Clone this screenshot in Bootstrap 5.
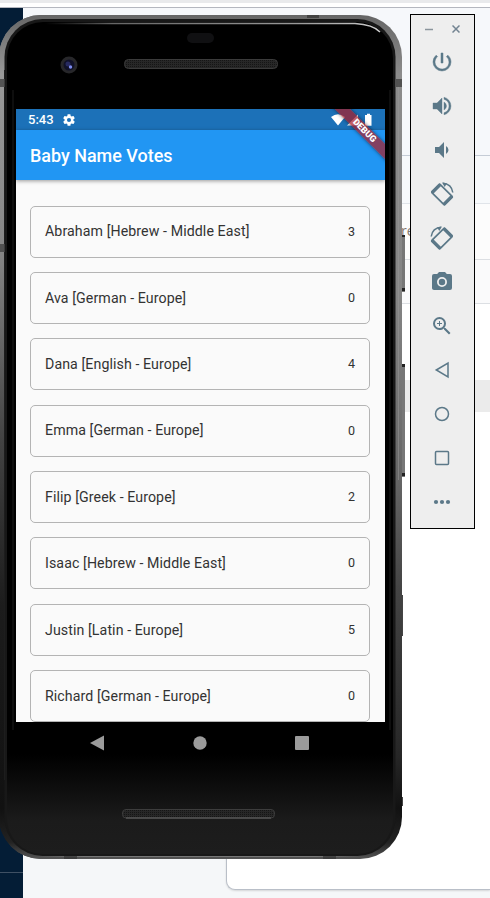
<!DOCTYPE html>
<html lang="en">
<head>
<meta charset="utf-8">
<meta name="viewport" content="width=device-width, initial-scale=1">
<title>Baby Name Votes</title>
<link href="https://cdn.jsdelivr.net/npm/bootstrap@5.3.0/dist/css/bootstrap.min.css" rel="stylesheet">
<style>
body{font-family:Roboto,sans-serif;background:#fff}
.desktop{width:490px;height:898px;background:#f5f7f9}
.browser-strip{height:8px;background:linear-gradient(#e9eaec 0 3px,#fff 3px 7px,#b4b7bf 7px)}
.side-nav{width:23px;height:890px;background:#041d36}
.side-nav hr{margin:864px 0 0;opacity:1;border-color:#3f5064}
.page-area{height:882px}
.page-top{background:#f6f8fb}
.p-head{height:148px;border-bottom:1px solid #c5ccd6}
.p-sub{height:48px;background:#f7f9fb;border-bottom:1px solid #e1e5ea}
.page-panel{margin-left:203px;border:1px solid #b9bfc8;border-top:0;border-right:0;border-radius:0 0 0 9px;background:#fff;box-shadow:0 1px 2px #0002}
.p-row{height:56px;background:#fcfcfc;border-bottom:1px solid #dcdfe3;padding:17px 0 0 174px;font:14px/20px "Open Sans",sans-serif;color:#85796f}
.p-row2{height:44px;background:#fafafb;border-bottom:1px solid #dcdfe3}
.p-band{height:32px;margin-top:76px;background:#ebebeb}
.phone{left:0;top:0;width:406px;height:898px}
.screen{left:16px;top:109px;width:369px;height:613px;background:#fafafa}
.status{height:21px;background:#1c71b8;color:#fff;font-size:13px;font-weight:500;padding:0 12px 0 12px}
.appbar{height:50px;background:#2196f3;color:#fff;font-size:17.95px;font-weight:500;padding-left:14px;line-height:51px;box-shadow:0 1px 4px #0006}
.vote-list{padding:25.600px 15px 0 14px;gap:14.350px}
.vote{height:52px;border:1px solid #b4b4b4;border-radius:5px;padding:1px 14px 0;font-size:14.2px;letter-spacing:.085px;color:#333;flex:none}
.vote b{font-weight:400;font-size:12.5px}
.ribbon{right:-22px;top:14px;width:90px;height:10.6px;transform:rotate(45deg);background:#a81e2ab8;box-shadow:0 0 4px #0008;color:#fff;font-size:9px;font-weight:900;line-height:11px;text-align:center;padding-left:7px}
.emu{left:410px;top:14px;width:65px;height:515px;border:1px solid #000;background:#eee;color:#5b7888;padding-right:2px}
.emu-title{height:25px;padding:2px 12px 0 14px}
.emu-btn{height:44px}
svg{display:block}
</style>
<script src="https://cdn.jsdelivr.net/npm/bootstrap@5.3.0/dist/js/bootstrap.bundle.min.js"></script>
</head>
<body>
<div class="desktop position-relative overflow-hidden">
  <div class="browser-strip"></div>
  <div class="d-flex">
    <div class="side-nav"><hr></div>
    <div class="page-area flex-grow-1 d-flex flex-column">
      <div class="page-top"><div class="p-head"></div><div class="p-sub"></div></div>
      <div class="page-panel flex-grow-1"><div class="p-row">re</div><div class="p-row2"></div><div class="p-band"></div></div>
    </div>
  </div>

  <div class="phone position-absolute">
    <svg width="406" height="898" viewBox="0 0 406 898">
      <defs>
        <linearGradient id="rim" x2="0" y2="1"><stop offset="0" stop-color="#666"/><stop offset=".07" stop-color="#8c8c8c"/><stop offset=".33" stop-color="#858585"/><stop offset=".55" stop-color="#666"/><stop offset=".68" stop-color="#444"/><stop offset=".88" stop-color="#262626"/><stop offset=".94" stop-color="#111"/><stop offset=".98" stop-color="#222"/><stop offset="1" stop-color="#555"/></linearGradient>
        <linearGradient id="rimL" x2="0" y2="1"><stop offset="0" stop-color="#666"/><stop offset=".07" stop-color="#999"/><stop offset=".28" stop-color="#868686"/><stop offset=".5" stop-color="#444"/><stop offset=".7" stop-color="#1c1c1c"/><stop offset=".94" stop-color="#111"/><stop offset=".98" stop-color="#222"/><stop offset="1" stop-color="#555"/></linearGradient>
        <linearGradient id="face" x2="0" y2="1"><stop offset="0" stop-color="#000"/><stop offset=".88" stop-color="#000"/><stop offset=".96" stop-color="#1b1b1b"/><stop offset="1" stop-color="#1d1d1d"/></linearGradient>
        <linearGradient id="shine"><stop offset="0" stop-color="#555" stop-opacity="0"/><stop offset=".2" stop-color="#666"/><stop offset=".75" stop-color="#999"/><stop offset="1" stop-color="#ccc"/></linearGradient>
        <linearGradient id="edge"><stop offset="0" stop-color="#777" stop-opacity="0"/><stop offset=".15" stop-color="#777"/><stop offset=".85" stop-color="#777"/><stop offset="1" stop-color="#777" stop-opacity="0"/></linearGradient>
        <pattern id="mesh" width="2" height="2" patternUnits="userSpaceOnUse"><rect width="2" height="2" fill="#272727"/><rect width="1" height="1" fill="#151515"/></pattern>
        <clipPath id="left"><path d="M0 0H200V898H0z"/></clipPath>
      </defs>
      <path d="M401 235h4v57h-4zM401 364h4v113h-4z" fill="#777"/>
      <path d="M402 235h3v2h-3zM402 288h3v3h-3zM402 364h3v3h-3zM402 473h3v3h-3z" fill="#222"/>
      <path d="M401 595h2v41h-2zM401 797h2v9h-2z" fill="#444"/>
      <rect x="-1" y="15" width="403" height="844" rx="42" fill="url(#rim)"/>
      <rect x="-1" y="15" width="403" height="844" rx="42" fill="url(#rimL)" clip-path="url(#left)"/>
      <rect x="4.500" y="19" width="391" height="837" rx="38" fill="#181818"/>
      <rect x="7" y="22" width="386" height="832" rx="36" fill="url(#face)"/>
      <path d="M4.500 70V780M13 90V730M390 90V730" stroke="#1d1d1d" fill="none"/>
      <path d="M398.500 80V480" stroke="#999" stroke-opacity=".5"/>
      <path d="M45 23.500H355q18 1 25 8.500" fill="none" stroke="url(#shine)" stroke-width="1.500"/>
      <path d="M35 856h330v1H35z" fill="url(#edge)"/>
      <path d="M0 79h5v8H0zM396 79h6v8h-6zM0 244h5v8H0z" fill="#444" fill-opacity=".8"/>
      <path d="M64 856h13v3H64zM323 856h13v3h-13zM307 15h12v3h-12z" fill="#333" fill-opacity=".7"/>
      <rect x="187" y="33" width="27" height="10" rx="5" fill="#101012"/>
      <rect x="124.500" y="59.500" width="153" height="9" rx="4" fill="url(#mesh)" stroke="#3b3b3b"/>
      <rect x="122.500" y="809.500" width="152" height="8.500" rx="3.500" fill="url(#mesh)" stroke="#3d3d3d"/>
      <path d="M126 818h145" stroke="#666"/>
      <circle cx="69" cy="65" r="8.500" fill="#27272a"/><circle cx="69" cy="65" r="5.500" fill="#101128"/><circle cx="68" cy="64" r="2.500" fill="#272a60"/><circle cx="70.500" cy="67" r="1.700" fill="#7d8cf0"/>
      <path d="M90 743l14-7.500v15z" fill="#9b9b9b"/><circle cx="200" cy="743" r="6.700" fill="#9b9b9b"/><rect x="295" y="736" width="14" height="14" rx="1" fill="#9b9b9b"/>
    </svg>
    <div class="screen position-absolute overflow-hidden d-flex flex-column">
      <div class="status d-flex align-items-center flex-shrink-0">
        <span>5:43</span>
        <svg class="ms-2" width="14" height="14" viewBox="0 0 24 24" fill="#fff"><path d="M19.430 12.980c.04-.32.07-.64.07-.98s-.03-.66-.07-.98l2.110-1.650a.5.500 0 0 0 .12-.64l-2-3.460a.5.500 0 0 0-.61-.22l-2.490 1a7.300 7.300 0 0 0-1.690-.98l-.38-2.650A.5.500 0 0 0 14 2h-4a.5.500 0 0 0-.49.42l-.38 2.650c-.61.25-1.170.59-1.690.98l-2.490-1a.5.500 0 0 0-.61.22l-2 3.460a.5.500 0 0 0 .12.640l2.110 1.650c-.04.32-.07.65-.07.98s.03.66.07.98l-2.110 1.650a.5.500 0 0 0-.12.640l2 3.460c.12.220.39.300.61.220l2.490-1c.52.400 1.080.730 1.690.980l.38 2.650c.03.240.24.420.49.420h4c.25 0 .46-.18.49-.42l.38-2.650c.61-.25 1.170-.59 1.690-.98l2.490 1c.23.090.49 0 .61-.22l2-3.460a.5.500 0 0 0-.12-.64zM12 15.500a3.500 3.500 0 1 1 0-7 3.500 3.500 0 0 1 0 7z"/></svg>
        <svg class="ms-auto" width="42" height="14" viewBox="0 0 42 14" fill="#fff"><path d="M0 4Q7-1.500 14 4L7 12.500zM16 12.500L27 1.500v11zM34 2h2V.800h3V2h1.500v10.700H34z"/></svg>
      </div>
      <div class="appbar flex-shrink-0">Baby Name Votes</div>
      <div class="vote-list d-flex flex-column">
        <div class="vote d-flex align-items-center justify-content-between"><span>Abraham [Hebrew - Middle East]</span><b>3</b></div>
        <div class="vote d-flex align-items-center justify-content-between"><span>Ava [German - Europe]</span><b>0</b></div>
        <div class="vote d-flex align-items-center justify-content-between"><span>Dana [English - Europe]</span><b>4</b></div>
        <div class="vote d-flex align-items-center justify-content-between"><span>Emma [German - Europe]</span><b>0</b></div>
        <div class="vote d-flex align-items-center justify-content-between"><span>Filip [Greek - Europe]</span><b>2</b></div>
        <div class="vote d-flex align-items-center justify-content-between"><span>Isaac [Hebrew - Middle East]</span><b>0</b></div>
        <div class="vote d-flex align-items-center justify-content-between"><span>Justin [Latin - Europe]</span><b>5</b></div>
        <div class="vote d-flex align-items-center justify-content-between"><span>Richard [German - Europe]</span><b>0</b></div>
      </div>
      <div class="ribbon position-absolute">DEBUG</div>
    </div>
  </div>

  <div class="emu position-absolute d-flex flex-column">
    <div class="emu-title d-flex align-items-center justify-content-between">
      <svg width="8" height="8" viewBox="0 0 8 8"><path d="M0 4.500H8" stroke="#8b959c" stroke-width="1.500"/></svg>
      <svg width="8" height="8" viewBox="0 0 8 8"><path d="M.5 .5l7 7M7.500 .5l-7 7" stroke="#728391" stroke-width="1.500"/></svg>
    </div>
    <div class="emu-btn d-flex align-items-center justify-content-center"><svg width="24" height="24" viewBox="0 0 24 24" fill="currentColor" stroke="currentColor" stroke-width=".5"><path d="M13 3h-2v10h2V3zm4.830 2.170l-1.420 1.420A6.920 6.920 0 0 1 19 12a7 7 0 1 1-11.420-5.420L6.170 5.170A8.930 8.930 0 0 0 3 12a9 9 0 0 0 18 0c0-2.740-1.230-5.180-3.170-6.830z"/></svg></div>
    <div class="emu-btn d-flex align-items-center justify-content-center"><svg width="24" height="24" viewBox="0 0 24 24" fill="currentColor" stroke="currentColor" stroke-width=".4"><path d="M3 9v6h4l5 5V4L7 9H3zm13.500 3A4.500 4.500 0 0 0 14 7.970v8.050A4.480 4.480 0 0 0 16.500 12zM14 3.230v2.060a7 7 0 0 1 0 13.420v2.060a9 9 0 0 0 0-17.540z"/></svg></div>
    <div class="emu-btn d-flex align-items-center justify-content-center"><svg width="24" height="24" viewBox="0 0 24 24" fill="currentColor"><path d="M18.500 12A4.500 4.500 0 0 0 16 7.970v8.050A4.480 4.480 0 0 0 18.500 12zM5 9v6h4l5 5V4L9 9H5z"/></svg></div>
    <div class="emu-btn d-flex align-items-center justify-content-center"><svg width="24" height="24" viewBox="0 0 24 24" fill="none" stroke="currentColor"><g transform="rotate(45 12 12.500)"><rect x="2.800" y="6.700" width="18.400" height="11.600" rx="1" stroke-width="1.700"/><path d="M4 6.500v12M20 6.500v12" stroke-width="2.800"/></g><path d="M13 1.300Q21.500 2 22.800 10.500" stroke-width="1.500"/><path d="M12 .6l5 .6-2.300 3.800z" fill="currentColor" stroke="none"/></svg></div>
    <div class="emu-btn d-flex align-items-center justify-content-center"><svg width="24" height="24" viewBox="0 0 24 24" fill="none" stroke="currentColor"><g transform="matrix(-1 0 0 1 24 0)"><g transform="rotate(45 12 12.500)"><rect x="2.800" y="6.700" width="18.400" height="11.600" rx="1" stroke-width="1.700"/><path d="M4 6.500v12M20 6.500v12" stroke-width="2.800"/></g><path d="M13 1.300Q21.500 2 22.800 10.500" stroke-width="1.500"/><path d="M12 .6l5 .6-2.300 3.800z" fill="currentColor" stroke="none"/></g></svg></div>
    <div class="emu-btn d-flex align-items-center justify-content-center"><svg width="24" height="24" viewBox="0 0 24 24" fill="currentColor"><circle cx="12" cy="12" r="3.200"/><path d="M9 2L7.170 4H4a2 2 0 0 0-2 2v12c0 1.100.9 2 2 2h16a2 2 0 0 0 2-2V6a2 2 0 0 0-2-2h-3.170L15 2H9zm3 15a5 5 0 1 1 0-10 5 5 0 0 1 0 10z"/></svg></div>
    <div class="emu-btn d-flex align-items-center justify-content-center"><svg width="24" height="24" viewBox="0 0 24 24" fill="currentColor"><path d="M15.500 14h-.79l-.28-.27A6.470 6.470 0 0 0 16 9.500 6.500 6.500 0 1 0 9.500 16c1.610 0 3.090-.59 4.230-1.570l.27.280v.79l5 4.990L20.490 19l-4.990-5zm-6 0a4.500 4.500 0 1 1 0-9 4.500 4.500 0 0 1 0 9zM12 10h-2v2H9v-2H7V9h2V7h1v2h2v1z"/></svg></div>
    <div class="emu-btn d-flex align-items-center justify-content-center"><svg width="24" height="24" viewBox="0 0 24 24" fill="none" stroke="currentColor" stroke-width="1.500"><path d="M6.300 12L18 5v14z"/></svg></div>
    <div class="emu-btn d-flex align-items-center justify-content-center"><svg width="24" height="24" viewBox="0 0 24 24" fill="none" stroke="currentColor" stroke-width="1.500"><circle cx="12" cy="12" r="6.500"/></svg></div>
    <div class="emu-btn d-flex align-items-center justify-content-center"><svg width="24" height="24" viewBox="0 0 24 24" fill="none" stroke="currentColor" stroke-width="1.500"><rect x="5.500" y="5.500" width="13" height="13" rx="1"/></svg></div>
    <div class="emu-btn d-flex align-items-center justify-content-center"><svg width="24" height="24" viewBox="0 0 24 24" fill="currentColor"><circle cx="6" cy="12" r="2.100"/><circle cx="12" cy="12" r="2.100"/><circle cx="18" cy="12" r="2.100"/></svg></div>
  </div>
</div>
</body>
</html>
